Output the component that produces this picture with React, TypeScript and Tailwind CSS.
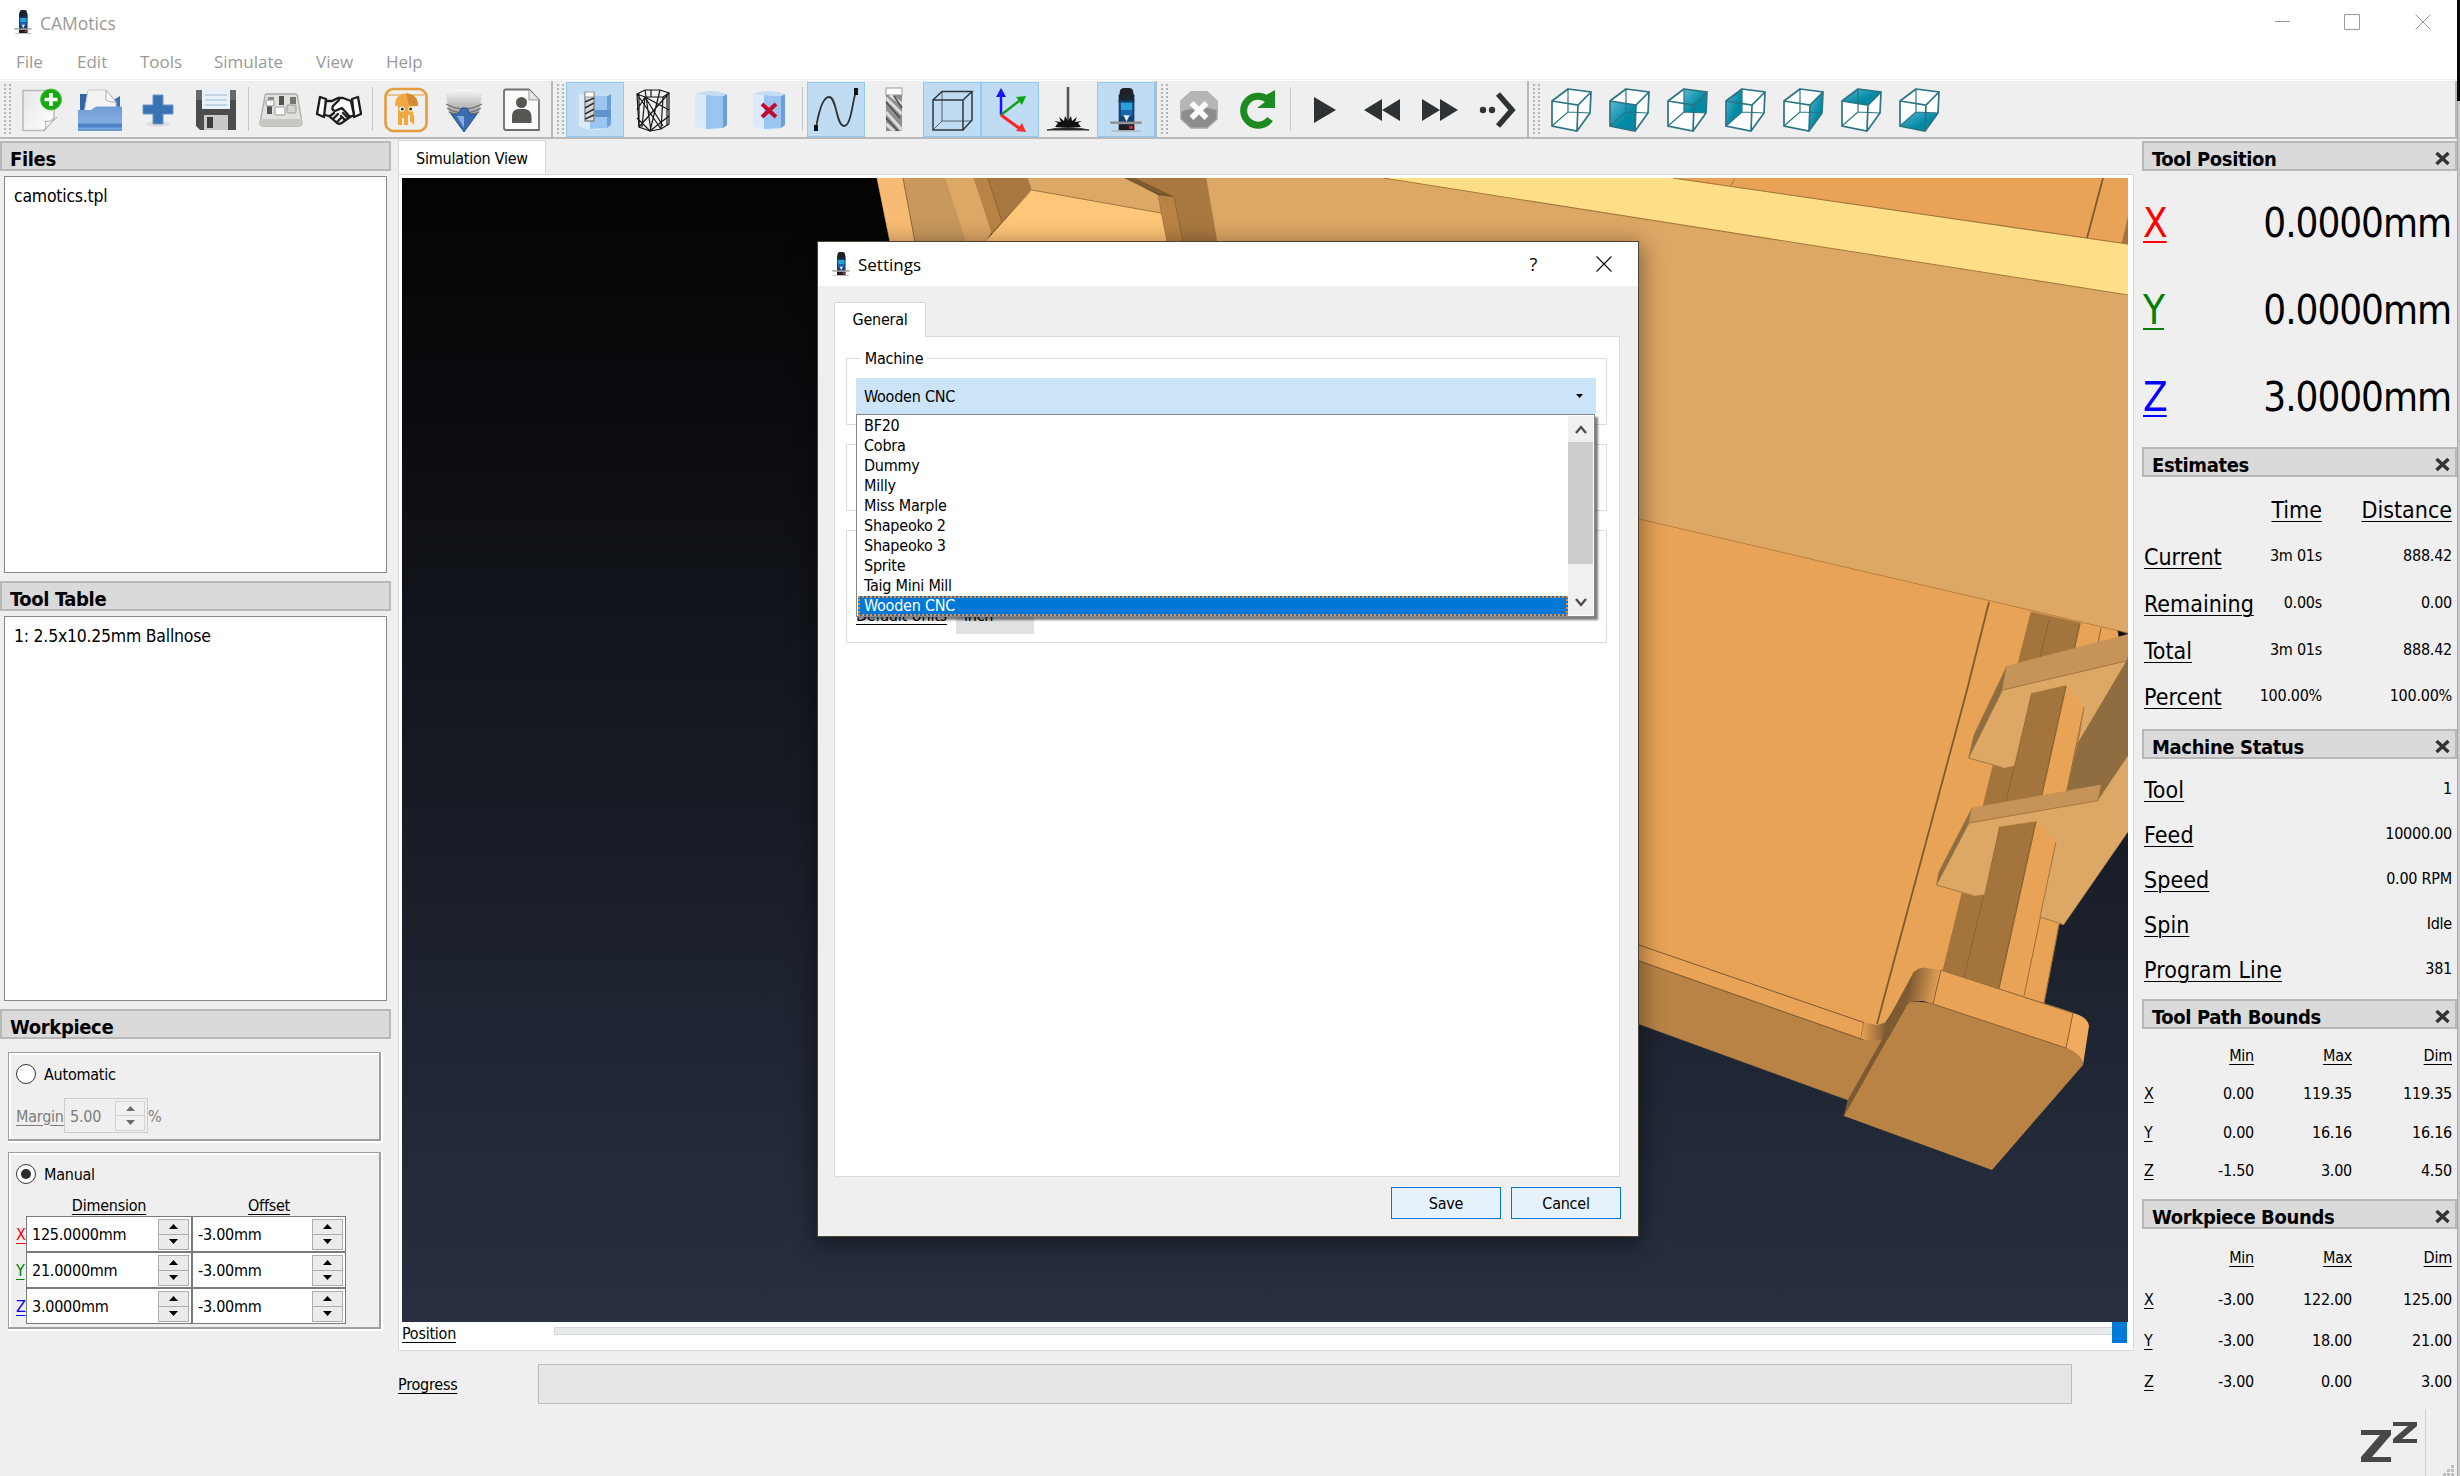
import React from "react";

const Svg = ({ w = 44, h = 44, vb, children }: { w?: number; h?: number; vb?: string; children: React.ReactNode }) => (
  <svg width={w} height={h} viewBox={vb ?? `0 0 ${w} ${h}`} className="block shrink-0 overflow-visible" fill="none">
    {children}
  </svg>
);

/* ---------- shared ---------- */

const AppIcon = ({ w = 18, h = 24 }: { w?: number; h?: number }) => (
  <Svg w={w} h={h} vb="0 0 30 42">
    <rect x="9" y="0" width="13" height="13" rx="4" fill="#1f2328" />
    <rect x="8" y="6" width="15" height="8" fill="#1a2530" />
    <rect x="8" y="12" width="15" height="21" fill="#12406f" />
    <rect x="10" y="14" width="11" height="7" fill="#2aa0d8" />
    <rect x="10" y="21" width="11" height="6" fill="#1766ad" />
    <path d="M12.500 26H18.500L15.500 32Z" fill="#e8f0fa" />
    <rect x="0" y="32" width="30" height="2.200" fill="#8d8d8d" />
    <rect x="8" y="34.500" width="15" height="6" fill="#1d1d22" />
    <rect x="18" y="36" width="3.500" height="3" fill="#c33" />
    <rect x="1" y="40.400" width="28" height="1.400" fill="#b5b5b5" />
  </Svg>
);

const Handle = () => (
  <div className="my-[4px] ml-[4px] h-[50px] w-[7px] shrink-0 bg-[radial-gradient(circle_at_1px_1px,#b4b4b4_1px,transparent_1.2px)] bg-[length:5px_4px]" />
);

const Sep = () => <div className="mx-[4px] h-[44px] w-px shrink-0 bg-[#c6c6c6]" />;

const Btn = ({ on, children }: { on?: boolean; children: React.ReactNode }) => (
  <div
    className={
      on
        ? "flex h-[55px] w-[58px] shrink-0 items-center justify-center border border-[#90c8f6] bg-[#c0dcf3] pt-[2px]"
        : "flex h-[55px] w-[58px] shrink-0 items-center justify-center pt-[2px]"
    }
  >
    {children}
  </div>
);

const Bar = ({ className, children }: { className: string; children: React.ReactNode }) => (
  <div className={`flex h-[58px] shrink-0 items-center border-b-2 border-r-2 border-[#b9b9b9] bg-[#efefef] ${className}`}>{children}</div>
);

/* ---------- toolbar icons ---------- */

const NewIcon = () => (
  <Svg>
    <path d="M3 2.500H34V30L24 42.500H3Z" fill="url(#pg)" stroke="#b9b9b9" strokeWidth="1.500" />
    <path d="M24 42.500C27 40 26 35 25 33C29 34 34 33 37 29Z" fill="#f6f6f6" stroke="#a9a9a9" />
    <circle cx="31" cy="11.500" r="10.500" fill="#17a80f" stroke="#3fc236" />
    <path d="M31 5V18M24.500 11.500H37.500" stroke="#fff" strokeWidth="3.600" />
    <defs>
      <linearGradient id="pg" x1="0" y1="0" x2="1" y2="1">
        <stop stopColor="#e6e6e6" />
        <stop offset="1" stopColor="#fff" />
      </linearGradient>
    </defs>
  </Svg>
);
const OpenIcon = () => (
  <Svg>
    <path d="M2 6H10V22H2Z" fill="#2f64a8" />
    <path d="M32 14L42 8V24H32Z" fill="#3a70b4" />
    <path d="M10 2H28L38 14V26H6Z" fill="#f3f3f3" stroke="#c9c9c9" />
    <path d="M28 2V12C31 14 35 14 38 14Z" fill="#fff" stroke="#aaa" />
    <path d="M0 22H13L18 18.500H44V43H0Z" fill="url(#fo)" />
    <path d="M0 35.500H44V42.500H0Z" fill="#4d83c6" />
    <path d="M0 40.500H44" stroke="#7ba7dc" strokeWidth="2" />
    <defs>
      <linearGradient id="fo" x1="0" y1="0" x2="0" y2="1">
        <stop stopColor="#6f9cd6" />
        <stop offset="1" stopColor="#8fb6e4" />
      </linearGradient>
    </defs>
  </Svg>
);
const PlusIcon = () => (
  <Svg>
    <ellipse cx="22" cy="36" rx="12" ry="3" fill="#dedede" />
    <path d="M17 7H27V17H37V26H27V36H17V26H7V17H17Z" fill="#3b72b4" stroke="#6a96cc" />
  </Svg>
);
const SaveIcon = () => (
  <Svg>
    <path d="M2 2H42V42H6L2 38Z" fill="#4c4c4f" />
    <path d="M2 2H42V12H2Z" fill="#69696c" />
    <rect x="8" y="1" width="28" height="20" fill="#e9f1f8" />
    <path d="M11 7H33M11 12H33M11 17H33" stroke="#b7cbdd" strokeWidth="1.500" />
    <rect x="10" y="27" width="24" height="15" fill="#c9c9c9" />
    <rect x="13" y="29" width="6" height="11" fill="#3c3c3e" />
  </Svg>
);
const KeypadIcon = () => (
  <Svg>
    <path d="M6 8Q6 6 8 6H36Q38 6 38.500 8L43 35Q43 38 40 38H4Q1 38 1 35Z" fill="#e2e1de" stroke="#aaa8a4" strokeWidth="1.300" />
    <path d="M1 31H43V36Q43 38.500 40 38.500H4Q1 38.500 1 36Z" fill="#c9c7c3" />
    <rect x="9" y="9" width="6" height="5" fill="#8b8983" />
    <rect x="20" y="8" width="5" height="9" fill="#55544f" />
    <rect x="31" y="9" width="6" height="7" fill="#77756f" />
    <rect x="8" y="17" width="5" height="9" fill="#55544f" />
    <rect x="7" y="12" width="8" height="6" rx="1" fill="#f5f5f3" stroke="#999" />
    <rect x="16" y="19" width="10" height="8" rx="1" fill="#fafafa" stroke="#999" />
    <rect x="28" y="17" width="9" height="8" rx="1" fill="#d4d3cf" stroke="#999" />
  </Svg>
);
const ShakeIcon = () => (
  <Svg>
    <g stroke="#1c1c1c" strokeWidth="2.300" strokeLinejoin="round" strokeLinecap="round">
      <path d="M3 9L9 11L7 29L0 26Z" fill="#fff" />
      <path d="M41 9L35 11L37 29L44 26Z" fill="#fff" />
      <path d="M9 13L15 13L21 10L26 10L34 13L37 27L33 29L25 20L18 23Q14 22 16 18L22 12" fill="#fff" />
      <path d="M8 27L12 28L20 35Q23 37 26 34L33 29M13 28L17 25M16 31L21 26M20 34L25 29M28 32L24 28M31 30L26 25" />
    </g>
  </Svg>
);
const OctoIcon = () => (
  <Svg>
    <rect x="1.500" y="1" width="41" height="42" rx="8" stroke="#e59c3c" strokeWidth="2.600" />
    <path d="M4 7H40" stroke="#e9b46c" strokeWidth="1.500" />
    <path d="M11 18Q11 6 22 5.500Q34 6 34 18L29 18V34H26V27H24V37H20V30H18V37H14V18Z" fill="#f2a842" />
    <path d="M22 5.500Q34 6 34 18L25 17Z" fill="#d48a32" />
    <circle cx="18" cy="21" r="2.600" fill="#fff" />
    <circle cx="27" cy="21" r="2.600" fill="#fff" />
    <circle cx="18.300" cy="21" r="1.600" fill="#2c3740" />
    <circle cx="26.700" cy="21" r="1.600" fill="#2c3740" />
    <path d="M29 27V36M17 30V37" stroke="#f2a842" strokeWidth="2.200" />
  </Svg>
);
const FunnelIcon = () => (
  <Svg>
    <path d="M4 6Q22 -4 40 6L37 25L28 30H16L7 25Z" fill="url(#fu)" />
    <path d="M4 16Q22 26 40 16M5 20Q22 30 39 20M7 24Q22 32 37 24" stroke="#6d6d6d" strokeWidth="1.400" />
    <path d="M9 26L16 26L20 20H25L28 26L35 26L22 44Z" fill="#3a6cb0" stroke="#27508a" />
    <path d="M15 28H22V40Z" fill="#86abdc" />
    <defs>
      <linearGradient id="fu" x1="0" y1="0" x2="0" y2="1">
        <stop stopColor="#fafafa" />
        <stop offset="1" stopColor="#8f8f8f" />
      </linearGradient>
    </defs>
  </Svg>
);
const PersonIcon = () => (
  <Svg>
    <path d="M6 1.500H29L39 12V42H6Q4 42 4 40V3.500Q4 1.500 6 1.500Z" fill="#fafafa" stroke="#6f6f6c" strokeWidth="1.800" />
    <path d="M29 1.500V12H39" fill="#e6e6e6" stroke="#999" />
    <circle cx="21.500" cy="14.500" r="5.500" fill="#555753" />
    <path d="M12 35V28Q12 22 18 21H25Q31 22 31.500 28V35Z" fill="#555753" />
  </Svg>
);

const Cyl = () => (
  <>
    <path d="M6 6Q22 0 38 6V38Q22 46 6 38Z" fill="#dce9f8" />
    <path d="M17 7L34 8V40L17 41Z" fill="#9bc5f1" />
    <path d="M34 8L38 6V37L34 40Z" fill="#6d9fd6" />
    <path d="M6 6Q22 0 38 6L34 8L17 7Z" fill="#c5dcf5" />
  </>
);
const CutIcon = () => (
  <Svg>
    <Cyl />
    <path d="M22 22H38V29H22Z" fill="#5d94cf" />
    <rect x="12" y="5" width="9" height="28" fill="#d9d9d9" stroke="#777" strokeWidth="1.200" />
    <rect x="12" y="4" width="9" height="5" fill="#fff" stroke="#999" />
    <path d="M12 14L21 10M12 20L21 15M12 26L21 21M12 31L21 27" stroke="#333" strokeWidth="1.600" />
  </Svg>
);
const MeshIcon = () => (
  <Svg>
    <g stroke="#151515" strokeWidth="1.200">
      <path d="M6 6L14 2H29L38 5V36L30 41L19 43L8 39Z" />
      <path d="M6 6L14 9H32L38 5M14 9L11 39M32 9L30 41M6 6L30 41M38 5L8 39M14 2L20 43M29 2L19 43M6 22L14 9L38 22M14 9L32 38M6 30L19 43L38 28M20 2V9M8 6V38M36 7V38" />
    </g>
  </Svg>
);
const CylIcon = () => (
  <Svg>
    <Cyl />
  </Svg>
);
const CylXIcon = () => (
  <Svg>
    <Cyl />
    <path d="M15 16L29 29M29 16L15 29" stroke="#c20b2d" strokeWidth="4" />
  </Svg>
);
const PathIcon = () => (
  <Svg>
    <path d="M2 40C4 28 8 9 15 9C23 9 22 38 30 38C37 38 38 16 42 3" stroke="#2e3338" strokeWidth="1.800" />
    <path d="M0 37H4V43H0ZM40 0H44V7H40Z" fill="#111" />
  </Svg>
);
const BitIcon = () => (
  <Svg>
    <rect x="14" y="0" width="16" height="7" fill="#fff" stroke="#999" />
    <rect x="14" y="7" width="16" height="36" fill="#8d8d8d" />
    <path d="M14 10L30 26M14 24L30 42M18 7L30 16M14 36L22 43" stroke="#dcdcdc" strokeWidth="3" />
    <path d="M14 14L28 30M14 30L26 43M22 8L30 20" stroke="#4d4d4d" strokeWidth="1.500" />
  </Svg>
);
const BoxIcon = () => (
  <Svg>
    <g stroke="#30363b" strokeWidth="1.500">
      <path d="M3 12H33V42H3ZM3 12L12 3.500H42L33 12M42 3.500V32L33 42" />
      <path d="M12 3.500V33H42M12 33L3 42" strokeWidth="1" opacity=".75" />
    </g>
  </Svg>
);
const AxesIcon = () => (
  <Svg>
    <path d="M13 27V6" stroke="#1414ff" strokeWidth="2.500" />
    <path d="M8 9L13 0L18 9Z" fill="#1414ff" />
    <path d="M13 27L31 13" stroke="#10a010" strokeWidth="2.500" />
    <path d="M38 8L34 17L28 9Z" fill="#0ea00e" />
    <path d="M13 27L31 40" stroke="#f22" strokeWidth="3" />
    <path d="M38 44L28 43L34 35Z" fill="#f23030" />
  </Svg>
);
const LaserIcon = () => (
  <Svg>
    <path d="M22 -1V36" stroke="#555" strokeWidth="2.600" />
    <path d="M1 42Q22 37 43 42Z" fill="#222" stroke="#333" />
    <path d="M9 39L12 35L8 33L15 34L13 29L18 33L19 28L22 33L25 28L26 33L31 29L29 34L36 33L32 35L35 39Z" fill="#111" />
  </Svg>
);
const StopIcon = () => (
  <Svg>
    <path d="M14 4H30L40 13V31L30 40H14L4 31V13Z" fill="#8c8c8c" stroke="#a6a6a6" strokeWidth="1.500" />
    <path d="M14 4H30L40 13V22Q22 16 4 24V13Z" fill="#b5b5b5" />
    <path d="M14.500 15L29.500 30M29.500 15L14.500 30" stroke="#fff" strokeWidth="5.500" />
  </Svg>
);
const ReloadIcon = () => (
  <Svg>
    <path d="M35 31A14.500 14.500 0 1 1 33 12" stroke="#1e8a22" strokeWidth="7" />
    <path d="M40 2V20H22L30 14L29 8Z" fill="#1e8a22" />
  </Svg>
);
const PlayIcon = () => (
  <Svg>
    <path d="M12 9V35L34 22Z" fill="#2f3234" />
  </Svg>
);
const RewIcon = () => (
  <Svg>
    <path d="M22 11V33L4 22ZM40 11V33L22 22Z" fill="#2f3234" />
  </Svg>
);
const FwdIcon = () => (
  <Svg>
    <path d="M4 11V33L22 22ZM22 11V33L40 22Z" fill="#2f3234" />
  </Svg>
);
const StepIcon = () => (
  <Svg>
    <circle cx="7" cy="22" r="3.200" fill="#333" />
    <circle cx="16" cy="22" r="3.200" fill="#333" />
    <path d="M22 6L36 22L22 38" stroke="#2f3234" strokeWidth="5.500" />
  </Svg>
);
const Cube = ({ face }: { face?: string }) => (
  <Svg w={42} h={46} vb="-1 -1 42 46">
    <path d="M17 1L40 4L39 25L26 43L1 38V13Z" fill="#fff" />
    {face && <polygon points={face} fill="url(#cf)" />}
    <path d="M17 1L40 4L39 25L26 43L1 38V13ZM1 13L27 17L40 4M27 17L26 43" stroke="#2a7484" strokeWidth="1.700" />
    <path d="M17 1V24L1 38M17 24L39 25" stroke="#2a7484" strokeWidth="1.200" />
    <defs>
      <linearGradient id="cf" x1="0" y1="0" x2="1" y2="1">
        <stop stopColor="#5cb8d6" />
        <stop offset=".6" stopColor="#028aa4" />
      </linearGradient>
    </defs>
  </Svg>
);
const cubeFaces = [
  undefined,
  "1,13 27,17 26,43 1,38",
  "17,1 40,4 39,25 17,24",
  "1,13 17,1 17,24 1,38",
  "27,17 40,4 39,25 26,43",
  "1,13 17,1 40,4 27,17",
  "1,38 17,24 39,25 26,43",
];

const Toolbar = () => (
  <div className="flex h-[59px] w-[2457px] shrink-0 border-t border-white bg-[#efefef]">
    <Bar className="w-[553px]">
      <Handle />
      <div className="w-[6px]" />
      <Btn><NewIcon /></Btn>
      <Btn><OpenIcon /></Btn>
      <Btn><PlusIcon /></Btn>
      <Btn><SaveIcon /></Btn>
      <div className="mr-[3px] ml-[3px] h-[44px] w-px shrink-0 bg-[#c6c6c6]" />
      <Btn><KeypadIcon /></Btn>
      <Btn><ShakeIcon /></Btn>
      <Sep />
      <Btn><OctoIcon /></Btn>
      <Btn><FunnelIcon /></Btn>
      <Btn><PersonIcon /></Btn>
    </Bar>
    <Bar className="w-[604px]">
      <Handle />
      <div className="w-[4px]" />
      <Btn on><CutIcon /></Btn>
      <Btn><MeshIcon /></Btn>
      <Btn><CylIcon /></Btn>
      <Btn><CylXIcon /></Btn>
      <Sep />
      <Btn on><PathIcon /></Btn>
      <Btn><BitIcon /></Btn>
      <Btn on><BoxIcon /></Btn>
      <Btn on><AxesIcon /></Btn>
      <Btn><LaserIcon /></Btn>
      <Btn on><AppIcon w={32} h={44} /></Btn>
    </Bar>
    <Bar className="w-[372px]">
      <Handle />
      <div className="w-[4px]" />
      <Btn><StopIcon /></Btn>
      <Btn><ReloadIcon /></Btn>
      <Sep />
      <Btn><PlayIcon /></Btn>
      <Btn><RewIcon /></Btn>
      <Btn><FwdIcon /></Btn>
      <Btn><StepIcon /></Btn>
    </Bar>
    <Bar className="flex-1 border-r-0">
      <Handle />
      <div className="w-[2px]" />
      {cubeFaces.map((f, i) => (
        <Btn key={i}><Cube face={f} /></Btn>
      ))}
    </Bar>
  </div>
);

/* ---------- docks ---------- */

const DockTitle = ({ title, close }: { title: string; close?: boolean }) => (
  <div className="flex h-[30px] shrink-0 items-center justify-between border-2 border-[#b8b8b8] bg-[#dadada] pr-[5px] pl-[8px]">
    <span className="pt-[5px] text-[20px] leading-none font-bold tracking-[-0.018em] whitespace-nowrap">{title}</span>
    {close && (
      <div className="pt-[4px]">
        <Svg w={15} h={13}>
          <path d="M1.500 1L13.500 12M13.500 1L1.500 12" stroke="#333" strokeWidth="3.400" />
        </Svg>
      </div>
    )}
  </div>
);

const Arrows = ({ dim }: { dim?: boolean }) => (
  <div className={dim ? "flex h-[30px] w-[30px] flex-col border border-[#d2d2d2] bg-[#f0f0f0]" : "flex h-[31px] w-[31px] flex-col border border-[#acacac] bg-[#ebebeb]"}>
    <div className={dim ? "flex flex-1 items-center justify-center border-b border-[#d2d2d2]" : "flex flex-1 items-center justify-center border-b border-[#acacac]"}>
      <Svg w={9} h={5}><path d="M0 5L4.500 0L9 5Z" fill={dim ? "#6d6d6d" : "#000"} /></Svg>
    </div>
    <div className="flex flex-1 items-center justify-center">
      <Svg w={9} h={5}><path d="M0 0L4.500 5L9 0Z" fill={dim ? "#6d6d6d" : "#000"} /></Svg>
    </div>
  </div>
);

const Radio = ({ label, on }: { label: string; on?: boolean }) => (
  <div className="flex h-[22px] items-center">
    <div className="mr-[8px] flex h-[20px] w-[20px] items-center justify-center rounded-full border border-[#333] bg-white">
      {on && <div className="h-[10px] w-[10px] rounded-full bg-[#2b2b2b]" />}
    </div>
    <span className="pt-[2px]">{label}</span>
  </div>
);

const frame = "border border-r-2 border-b-2 border-[#a0a0a0] shadow-[1px_1px_0_1px_#fff,inset_2px_2px_0_#fff]";

const AXES = [
  { a: "X", c: "text-[#ff0000]", d: "125.0000mm" },
  { a: "Y", c: "text-[#008000]", d: "21.0000mm" },
  { a: "Z", c: "text-[#0000ff]", d: "3.0000mm" },
];

const listBox = "mt-[5px] ml-[4px] w-[383px] shrink-0 border border-[#828790] bg-white pt-[8px] pl-[9px] text-[17.500px]";

const LeftDock = () => (
  <div className="flex w-[391px] shrink-0 flex-col pt-[1px]">
    <DockTitle title="Files" />
    <div className={`h-[397px] ${listBox}`}>camotics.tpl</div>
    <div className="h-[8px]" />
    <DockTitle title="Tool Table" />
    <div className={`h-[385px] ${listBox}`}>1: 2.5x10.25mm Ballnose</div>
    <div className="h-[8px]" />
    <DockTitle title="Workpiece" />
    <div className={`mt-[13px] ml-[8px] h-[89px] w-[373px] shrink-0 pt-[10px] pl-[7px] ${frame}`}>
      <Radio label="Automatic" />
      <div className="mt-[13px] flex h-[35px] items-center text-[#7d7d7d]">
        <span className="w-[48px] pt-[2px] underline underline-offset-3">Margin</span>
        <div className="flex h-[35px] w-[84px] items-center justify-between border border-[#ccc] pr-[2px] pl-[5px]">
          <span className="pt-[2px]">5.00</span>
          <Arrows dim />
        </div>
        <span className="pt-[2px]">%</span>
      </div>
    </div>
    <div className={`mt-[11px] ml-[8px] h-[177px] w-[373px] shrink-0 pt-[10px] pl-[7px] ${frame}`}>
      <Radio label="Manual" on />
      <div className="mt-[11px] flex h-[20px] items-center underline underline-offset-3">
        <span className="ml-[10px] w-[166px] text-center">Dimension</span>
        <span className="w-[154px] text-center">Offset</span>
      </div>
      {AXES.map((r) => (
        <div key={r.a} className="flex h-[36px] items-center">
          <span className={`w-[10px] pt-[2px] underline underline-offset-3 ${r.c}`}>{r.a}</span>
          <div className="flex h-[36px] w-[166px] items-center justify-between border border-[#7a7a7a] bg-white pr-[2px] pl-[5px]">
            <span className="pt-[2px]">{r.d}</span>
            <Arrows />
          </div>
          <div className="flex h-[36px] w-[154px] items-center justify-between border border-[#7a7a7a] bg-white pr-[2px] pl-[5px]">
            <span className="pt-[2px]">-3.00mm</span>
            <Arrows />
          </div>
        </div>
      ))}
    </div>
  </div>
);

const Bounds = ({ rows, head, rowH }: { rows: string[][]; head: string; rowH: string }) => (
  <div className="pr-[5px] pl-[2px]">
    {[["", "Min", "Max", "Dim"], ...rows].map((r, i) => (
      <div key={i} className={`flex items-center ${i === 0 ? head : rowH}`}>
        <span className="w-[20px] underline underline-offset-3">{r[0]}</span>
        {r.slice(1).map((v, j) => (
          <span key={j} className={`text-right ${j === 0 ? "w-[90px]" : j === 1 ? "w-[98px]" : "w-[100px]"} ${i === 0 ? "underline underline-offset-3" : ""}`}>{v}</span>
        ))}
      </div>
    ))}
  </div>
);

const RightDock = () => (
  <div className="flex w-[315px] shrink-0 flex-col pt-[1px]">
    <DockTitle title="Tool Position" close />
    <div className="h-[276px] shrink-0 pt-[8px] pr-[6px] pl-[1px]">
      {AXES.map((r) => (
        <div key={r.a} className="flex h-[87px] items-center justify-between text-[40px] leading-none tracking-[-0.026em]">
          <span className={`underline decoration-2 underline-offset-4 ${r.c}`}>{r.a}</span>
          <span>{r.a === "Z" ? "3.0000mm" : "0.0000mm"}</span>
        </div>
      ))}
    </div>
    <DockTitle title="Estimates" close />
    <div className="h-[252px] shrink-0 pt-[9px] pr-[5px] pl-[2px]">
      <div className="flex h-[47px] items-center justify-end text-[23px] tracking-normal underline decoration-1 underline-offset-3">
        <span className="w-[100px] text-right">Time</span>
        <span className="w-[130px] text-right">Distance</span>
      </div>
      {[["Current", "3m 01s", "888.42"], ["Remaining", "0.00s", "0.00"], ["Total", "3m 01s", "888.42"], ["Percent", "100.00%", "100.00%"]].map((r) => (
        <div key={r[0]} className="flex h-[46.700px] items-center">
          <span className="w-[112px] pt-[2px] text-[23px] tracking-normal underline decoration-1 underline-offset-3">{r[0]}</span>
          <span className="w-[66px] text-right whitespace-nowrap">{r[1]}</span>
          <span className="w-[130px] text-right">{r[2]}</span>
        </div>
      ))}
    </div>
    <DockTitle title="Machine Status" close />
    <div className="h-[240px] shrink-0 pt-[8px] pr-[5px] pl-[2px]">
      {[["Tool", "1"], ["Feed", "10000.00"], ["Speed", "0.00 RPM"], ["Spin", "Idle"], ["Program Line", "381"]].map((r) => (
        <div key={r[0]} className="flex h-[45px] items-center justify-between">
          <span className="text-[23px] tracking-[0.004em] underline decoration-1 underline-offset-3">{r[0]}</span>
          <span className="pb-px">{r[1]}</span>
        </div>
      ))}
    </div>
    <DockTitle title="Tool Path Bounds" close />
    <div className="h-[170px] shrink-0 pt-[8px]">
      <Bounds head="h-[38px]" rowH="h-[38.500px]" rows={[["X", "0.00", "119.35", "119.35"], ["Y", "0.00", "16.16", "16.16"], ["Z", "-1.50", "3.00", "4.50"]]} />
    </div>
    <DockTitle title="Workpiece Bounds" close />
    <div className="h-[179px] shrink-0 pt-[7px]">
      <Bounds head="h-[43px]" rowH="h-[41px]" rows={[["X", "-3.00", "122.00", "125.00"], ["Y", "-3.00", "18.00", "21.00"], ["Z", "-3.00", "0.00", "3.00"]]} />
    </div>
    <div className="flex h-[68px] items-end justify-end pr-[2px]">
      <Svg w={58} h={54}>
        <path d="M0 8H30V13L11 35H30V40H0V35L19 13H0Z" fill="#474747" />
        <path d="M32 0H56V4L41 17H56V21H32V17L47 4H32Z" fill="#474747" />
      </Svg>
      <div className="ml-[6px] h-[67px] w-px bg-[#d0d0d0]" />
      <div className="ml-[16px]">
        <Svg w={13} h={12}>
          <path d="M9 1H12V4H9ZM5 5H8V8H5ZM9 5H12V8H9ZM1 9H4V12H1ZM5 9H8V12H5ZM9 9H12V12H9Z" fill="#bdbdbd" />
        </Svg>
      </div>
    </div>
  </div>
);

/* ---------- 3D view ---------- */

const P = ({ p, f }: { p: string; f: string }) => <polygon points={p} fill={f} stroke={f} strokeWidth=".6" />;

const Scene = () => (
  <svg width="1726" height="1144" viewBox="402 178 1726 1144" className="block" fill="none">
    <defs>
      <linearGradient id="bg" x1="0" y1="0" x2="0" y2="1">
        <stop stopColor="#030303" />
        <stop offset="1" stopColor="#283041" />
      </linearGradient>
      <linearGradient id="c1" x1="0" y1="0" x2="1" y2="0">
        <stop stopColor="#e8a356" />
        <stop offset="1" stopColor="#7d5a32" />
      </linearGradient>
      <linearGradient id="c2" x1="0" y1="0" x2="1" y2=".2">
        <stop offset=".2" stopColor="#7d5a32" />
        <stop offset="1" stopColor="#e8a356" />
      </linearGradient>
    </defs>
    <rect x="402" y="178" width="1726" height="1144" fill="url(#bg)" />
    <P f="#f8bb73" p="877,178 903,178 915,242 890,242" />
    <P f="#c8985c" p="903,178 945,178 966,242 915,242" />
    <P f="#dda765" p="945,178 974,178 992,232 985,242 966,242" />
    <P f="#b98345" p="974,178 988,178 1002,222 992,233" />
    <P f="#a97840" p="988,178 1028,178 1032,190 1002,222" />
    <P f="#dda765" p="1028,178 1125,178 1158,195 1161,213 1032,190" />
    <P f="#fec678" p="1032,190 1161,213 1167,242 985,242" />
    <P f="#dda765" p="1206,178 1383,178 2128,295 2128,633 1639,519 1217,420" />
    <P f="#a97840" p="1134,178 1206,178 1217,242 1183,242 1174,197" />
    <P f="#b98345" p="1158,195 1174,197 1183,242 1167,242" />
    <P f="#7d5a32" p="1125,178 1134,178 1174,197 1158,194" />
    <path d="M903 178L915 242M988 178L1002 222M1032 190L1161 213M1174 197L1183 242" stroke="#8a6436" opacity=".8" />
    <P f="#ffde88" p="1383,178 1673,178 2128,244 2128,295" />
    <P f="#e8a356" p="1673,178 2128,178 2128,244" />
    <P f="#a4743d" p="2128,218 2122,243 2128,244" />
    <path d="M1383 178L2128 295M1673 178L2128 244" stroke="#a5793f" strokeWidth="1.100" />
    <path d="M1735 178L1731 186" stroke="#a5793f" />
    <path d="M2103 178L2087 238" stroke="#7d5a32" strokeWidth="1.800" />

    <P f="#e8a356" p="1639,519 2128,633 2128,700 2059,924 2044,1003 1920,970 1877,1035 1864,1040 1639,961" />
    <path d="M1639 519L2128 633" stroke="#b98345" strokeWidth="1" />
    <path d="M1989 602L1967 690L1877 1024" stroke="#7d5a32" strokeWidth="1.800" />
    <P f="#a4743d" p="2031,612 2080,623 2066,685 2036,821 1999,989 1943,970 1962,893 1983,806 2018,663" />
    <path d="M2049 620L1964 978M2101 628L2098 643" stroke="#8a6436" strokeWidth="1" />
    <path d="M2080 623L1999 988" stroke="#8a6436" strokeWidth="1.300" />
    <path d="M2084 708L2024 996M2059 924L2044 1003" stroke="#9a6c38" strokeWidth="1" />
    <P f="#0d1116" p="2118,631 2128,634 2119,637" />

    <P f="#8f6d40" p="2126,661 2128,650 2128,756 2098,801 2101,785 2067,791 2078,742" />
    <P f="#dda765" p="2002.500,690 2126,661 2078,742 2084,707 2066,685 2031,693 2014,765.500 2003.600,767.700 1968.600,758" />
    <P f="#8f6d40" p="2007,666 2002.500,690 1968.600,758 1974,735" />
    <P f="#c69359" p="2007,666 2128,634.500 2128,655 2126,661 2002.500,690" />
    <path d="M2002.500 690L2126 661M1968.600 758L2003 767.700M2084 707L2078 742" stroke="#a5793f" strokeWidth="1" />

    <P f="#dda765" p="1969,823 2098,800.600 2128,756 2128,831.600 2063.600,924.600 2040,917 2056,842 2036.400,821 1999,826.600 1984,894.400 1973,895.500 1936.400,885" />
    <P f="#8f6d40" p="1972,808 1969,823 1936.400,885 1939,872" />
    <P f="#c69359" p="1972,808 2101,785 2098,800.600 1969,823" />
    <path d="M1969 823L2098 800.600L2101 785M1936.400 885L1973 895.500M2056 842L2040 917L2063.600 924.600" stroke="#a5793f" strokeWidth="1" />

    <P f="#b98345" p="1639,961 1864,1040 1882,1040 1900,1040 1848,1100 1639,1024" />
    <path d="M1639 945L1864 1022.600L1861 1038M1639 961L1864 1040" stroke="#7d5a32" strokeWidth="1" />
    <polygon points="1864,1022.600 1877,1025 1887,1022 1884,1040 1870,1041 1861,1038.500" fill="url(#c1)" />
    <P f="#7d5a32" p="1914,972 1918,990 1907,1004.600 1844,1116 1848,1100 1882,1040 1887,1022" />
    <path d="M1914 972L1918 969L1923 967.500L1941 970L1933 1004L1923 1001L1914 1001.600L1904 1009Z" fill="url(#c2)" />
    <P f="#e8a356" p="1941,970 2073,1013 2066,1048 1933,1004" />
    <path d="M2073 1013Q2088 1017 2089 1026L2083 1065Q2082 1055 2066 1048Z" fill="#f0ab5e" />
    <path d="M1844 1116L1907 1005Q1912 999 1933 1004L2066 1048Q2082 1054 2083 1065L1992 1170Z" fill="#b98345" />
    <path d="M1941 970L1933 1004L2066 1048L2073 1013Z" stroke="#8a6436" strokeWidth="1" />
  </svg>
);

const Center = () => (
  <div className="ml-[7px] flex w-[1736px] shrink-0 flex-col">
    <div className="z-10 flex h-[34px] w-[148px] shrink-0 items-center justify-center border border-b-0 border-[#d9d9d9] bg-white pt-[2px]">Simulation View</div>
    <div className="h-[1177px] w-[1736px] shrink-0 border border-[#d9d9d9] bg-white pt-[3px] pl-[3px]">
      <Scene />
      <div className="flex h-[22px] w-[1726px] items-center">
        <span className="w-[152px] pt-[2px] underline underline-offset-3">Position</span>
        <div className="mb-[4px] h-[8px] flex-1 border border-r-0 border-[#d6d6d6] bg-[#e7eaea]" />
        <div className="mr-px mb-px h-[21px] w-[15px] bg-[#007ad9]" />
      </div>
    </div>
    <div className="mt-[13px] flex h-[40px] items-center">
      <span className="w-[140px] pt-[2px] underline underline-offset-3">Progress</span>
      <div className="h-[40px] w-[1534px] border border-[#bcbcbc] bg-[#e6e6e6]" />
    </div>
  </div>
);

/* ---------- dialog ---------- */

const MACHINES = ["BF20", "Cobra", "Dummy", "Milly", "Miss Marple", "Shapeoko 2", "Shapeoko 3", "Sprite", "Taig Mini Mill", "Wooden CNC"];

const Popup = () => (
  <div className="absolute top-[36px] left-0 flex h-[203px] w-[739px] border border-[#828790] bg-white p-[1px] shadow-[3px_3px_2px_rgba(0,0,0,0.5)]">
    <div className="flex-1">
      {MACHINES.map((m, i) => (
        <div
          key={m}
          className={
            i === 9
              ? "flex h-[20px] items-center border-2 border-dotted border-[#ff8728] bg-[#0078d7] pl-[4px] leading-none text-white"
              : "flex h-[20px] items-center pl-[6px] leading-none"
          }
        >
          {m}
        </div>
      ))}
    </div>
    <div className="flex w-[25px] flex-col items-center bg-[#f0f0f0]">
      <div className="flex h-[26px] items-center">
        <Svg w={12} h={9}><path d="M1 8L6 2L11 8" stroke="#505050" strokeWidth="2.400" /></Svg>
      </div>
      <div className="h-[122px] w-full bg-[#cdcdcd]" />
      <div className="flex-1" />
      <div className="flex h-[26px] items-center">
        <Svg w={12} h={9}><path d="M1 1L6 7L11 1" stroke="#505050" strokeWidth="2.400" /></Svg>
      </div>
    </div>
  </div>
);

const Dialog = () => (
  <div className="absolute top-[241px] left-[817px] flex h-[996px] w-[822px] flex-col border border-[#4d4334] bg-[#efefef] shadow-[0_6px_22px_3px_rgba(0,0,0,0.42)]">
    <div className="flex h-[44px] shrink-0 items-center bg-white pl-[14px]">
      <AppIcon />
      <span className="ml-[8px] flex-1 pt-[2px] [font-family:'Open_Sans','Noto_Sans',sans-serif] text-[17px] tracking-normal">Settings</span>
      <span className="mr-[59px] [font-family:'Open_Sans','Noto_Sans',sans-serif] text-[18px]">?</span>
      <div className="mr-[26px]"><Svg w={16} h={16}><path d="M.5 .5L15.500 15.500M15.500 .5L.5 15.500" stroke="#111" strokeWidth="1.200" /></Svg></div>
    </div>
    <div className="mt-[16px] ml-[16px] w-[786px]">
      <div className="relative z-10 -mb-px flex h-[35px] w-[92px] items-center justify-center border border-b-0 border-[#d9d9d9] bg-white">General</div>
      <div className="h-[841px] border border-[#dcdcdc] bg-white pt-[21px] pl-[11px]">
        <div className="h-[67px] w-[761px] border border-[#dcdcdc]">
          <div className="-mt-[12px] ml-[14px] flex h-[22px] w-[66px] items-center justify-center bg-white pt-[2px]">Machine</div>
          <div className="relative mt-[9px] ml-[9px] flex h-[36px] w-[740px] items-center justify-between bg-[#cce4f7] pr-[13px] pl-[8px]">
            <span className="pt-[2px]">Wooden CNC</span>
            <Svg w={7} h={4}><path d="M0 0H7L3.500 4Z" fill="#000" /></Svg>
            <Popup />
          </div>
        </div>
        <div className="mt-[19px] h-[67px] w-[761px] border border-[#dcdcdc]" />
        <div className="mt-[19px] flex h-[113px] w-[761px] items-end border border-[#dcdcdc] pb-[8px] pl-[9px]">
          <span className="mb-[7px] w-[100px] underline underline-offset-3">Default Units</span>
          <div className="flex h-[36px] w-[78px] items-center bg-[#e1e1e1] pl-[8px]">inch</div>
        </div>
      </div>
    </div>
    <div className="mt-[10px] flex justify-end gap-[10px] pr-[17px]">
      <div className="flex h-[32px] w-[110px] items-center justify-center border border-[#0078d7] bg-[#e5f1fb] pt-px">Save</div>
      <div className="flex h-[32px] w-[110px] items-center justify-center border border-[#0078d7] bg-[#e5f1fb] pt-px">Cancel</div>
    </div>
  </div>
);

export default function App() {
  return (
    <div className="relative flex h-[1476px] w-[2460px] overflow-hidden bg-[#efefef] text-[16px] leading-[22px] tracking-[-0.015em] text-black [font-family:'DejaVu_Sans_Condensed','Noto_Sans',sans-serif]">
      <div className="flex w-[2457px] shrink-0 flex-col">
        <div className="h-[80px] shrink-0 border-b border-[#efefef] bg-white [font-family:'Open_Sans','Noto_Sans',sans-serif] text-[17px] tracking-normal text-[#999]">
          <div className="flex h-[43px] items-center pl-[14px]">
            <AppIcon />
            <span className="ml-[8px] flex-1 pt-[2px] text-[17.500px]">CAMotics</span>
            <Svg w={156} h={16}><path d="M0 7.500H15M69.500 .5H84.500V15.500H69.500ZM140.500 .5L155.500 15.500M155.500 .5L140.500 15.500" stroke="#999" /></Svg>
            <div className="w-[26px]" />
          </div>
          <div className="flex h-[36px] items-center pt-px pl-[16px]">
            <span className="w-[61px]">File</span>
            <span className="w-[63px]">Edit</span>
            <span className="w-[74px]">Tools</span>
            <span className="w-[102px]">Simulate</span>
            <span className="w-[70px]">View</span>
            <span>Help</span>
          </div>
        </div>
        <Toolbar />
        <div className="flex flex-1 pt-[1px]">
          <LeftDock />
          <Center />
          <div className="ml-[8px] flex"><RightDock /></div>
        </div>
      </div>
      <div className="flex w-[3px] flex-col">
        <div className="h-[101px] bg-[#0a0a0a]" />
        <div className="flex-1 border-l border-[#a8a8a8] bg-[#c9c9cc]" />
      </div>
      <Dialog />
    </div>
  );
}
